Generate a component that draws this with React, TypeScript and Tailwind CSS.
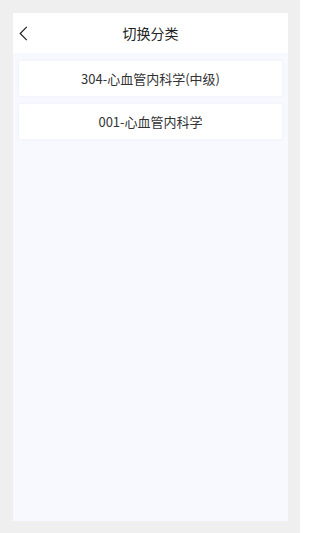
import React from "react";

const categories = ["304-心血管内科学(中级)", "001-心血管内科学"];

const App: React.FC = () => {
  return (
    <div
      className="h-[533px] w-[300px] bg-[#efefef] pt-[13px] pl-[13px] pr-[12px] pb-[12px]"
      style={{ fontFamily: '"Noto Sans CJK SC", "Noto Sans", sans-serif' }}
    >
      <div className="flex h-full flex-col bg-[#f7f9fe]">
        <div className="relative flex h-[40px] items-center justify-center bg-white">
          <button className="absolute left-[5px] top-[13px] flex h-[15px] w-[10px] items-center justify-center">
            <svg width="9" height="15" viewBox="0 0 9 15" fill="none">
              <path d="M7.8 0.8L1.2 7.5L7.8 14.2" stroke="#222" strokeWidth="1.2" />
            </svg>
          </button>
          <h1 className="text-[14px] font-normal text-[#222]">切换分类</h1>
        </div>
        <div className="flex flex-col gap-[8px] px-[6px] pt-[8px]">
          {categories.map((name) => (
            <div
              key={name}
              className="flex h-[35px] items-center justify-center bg-white text-[13px] text-[#333] shadow-[0_0_3px_rgba(210,218,235,0.3)]"
            >
              {name}
            </div>
          ))}
        </div>
      </div>
    </div>
  );
};

export default App;
